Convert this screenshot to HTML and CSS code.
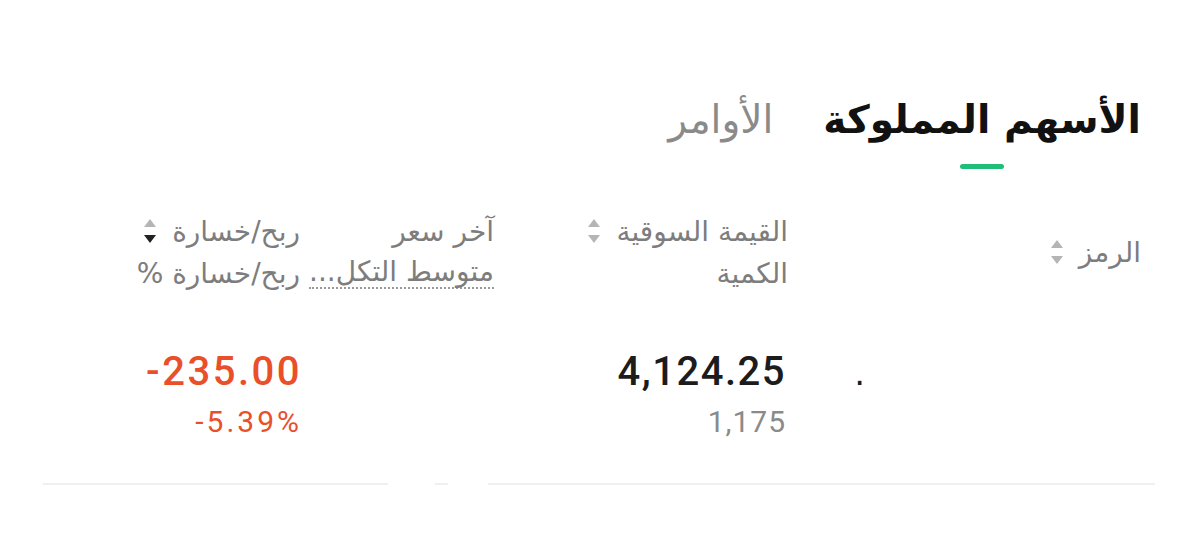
FILE: index.html
```html
<!DOCTYPE html>
<html lang="ar" dir="rtl">
<head>
    <meta charset="utf-8">
    <title>المحفظة</title>
    <link rel="stylesheet" href="styles.css">
</head>
<body>
    <div class="portfolio">
        <nav class="tabs">
            <div class="tab active">الأسهم المملوكة</div>
            <div class="tab">الأوامر</div>
        </nav>

        <div class="holdings">
            <div class="row head">
                <div class="cell symbol">
                    <span class="label">الرمز</span>
                    <span class="sort"><i class="up"></i><i class="down"></i></span>
                </div>
                <div class="cell">
                    <div class="line"><span class="label">القيمة السوقية</span><span class="sort"><i class="up"></i><i class="down"></i></span></div>
                    <div class="line"><span class="label">الكمية</span></div>
                </div>
                <div class="cell">
                    <div class="line"><span class="label">آخر سعر</span></div>
                    <div class="line"><span class="label dotted">متوسط التكل...</span></div>
                </div>
                <div class="cell">
                    <div class="line"><span class="label">ربح/خسارة</span><span class="sort"><i class="up"></i><i class="down on"></i></span></div>
                    <div class="line"><span class="label">ربح/خسارة %</span></div>
                </div>
            </div>

            <div class="row data">
                <div class="cell symbol"><span class="ticker">.</span></div>
                <div class="cell">
                    <div class="num big">4,124.25</div>
                    <div class="num small">1,175</div>
                </div>
                <div class="cell"></div>
                <div class="cell loss">
                    <div class="num big">-235.00</div>
                    <div class="num small">-5.39%</div>
                </div>
            </div>
        </div>
    </div>

    <div class="divider">
        <span class="seg wide"></span>
        <span class="seg tiny"></span>
        <span class="seg rest"></span>
    </div>
</body>
</html>
```

FILE: styles.css
```css
body {
    margin: 0;
    background-color: #fff;
    color: #1c1c1c;
    font-family: 'DejaVu Sans', 'Noto Sans', sans-serif;
}

.portfolio {
    padding: 0 59px 0 45px;
}

.tabs {
    display: flex;
    gap: 50px;
    padding-top: 92px;
    height: 78px;
}

.tab {
    font-size: 39px;
    color: #8a8a8a;
    position: relative;
    line-height: 56px;
}

.tab.active {
    color: #111;
    font-weight: bold;
}

.tab.active::after {
    content: '';
    position: absolute;
    bottom: 1px;
    left: 50%;
    margin-left: -22px;
    width: 44px;
    height: 5px;
    border-radius: 3px;
    background-color: #1fbf7a;
}

.row {
    display: grid;
    grid-template-columns: 353px 294px 194px 1fr;
}

.head {
    margin-top: 40px;
    height: 100px;
}

.head .cell {
    font-size: 28px;
    color: #7d7d7d;
}

.head .line {
    display: flex;
    align-items: center;
    gap: 16px;
    height: 42px;
}

.head .symbol {
    display: flex;
    align-items: center;
    gap: 16px;
    height: 84px;
}

.dotted {
    border-bottom: 2px dotted #9a9a9a;
    line-height: 30px;
}

.sort {
    display: inline-flex;
    flex-direction: column;
    gap: 8px;
}

.sort i {
    width: 0;
    height: 0;
    border-left: 6.5px solid transparent;
    border-right: 6.5px solid transparent;
}

.sort .up {
    border-bottom: 8px solid #b5b5b5;
}

.sort .down {
    border-top: 8px solid #b5b5b5;
}

.sort .down.on {
    border-top-color: #222;
}

.data {
    height: 135px;
    padding-top: 38px;
}

.data .symbol {
    padding-right: 276px;
    font-size: 34px;
    padding-top: 5px;
}

.num {
    font-family: Roboto, 'Liberation Sans', sans-serif;
    direction: ltr;
    text-align: right;
    padding-right: 2px;
}

.num.big {
    font-size: 40px;
    font-weight: 500;
    height: 56px;
    letter-spacing: 1.5px;
}

.num.small {
    font-size: 30px;
    color: #8a8a8a;
    letter-spacing: 1px;
}

.loss .num {
    color: #e9502a;
    padding-right: 0;
    margin-right: -2px;
}

.loss .num.big {
    letter-spacing: 2.5px;
}

.loss .num.small {
    letter-spacing: 3px;
}

.divider {
    display: flex;
    padding: 0 45px 0 43px;
    direction: ltr;
}

.seg {
    height: 2px;
    background-color: #efefef;
}

.seg.wide {
    width: 345px;
}

.seg.tiny {
    width: 13px;
    margin-left: 47px;
}

.seg.rest {
    flex: 1;
    margin-left: 40px;
}
```
